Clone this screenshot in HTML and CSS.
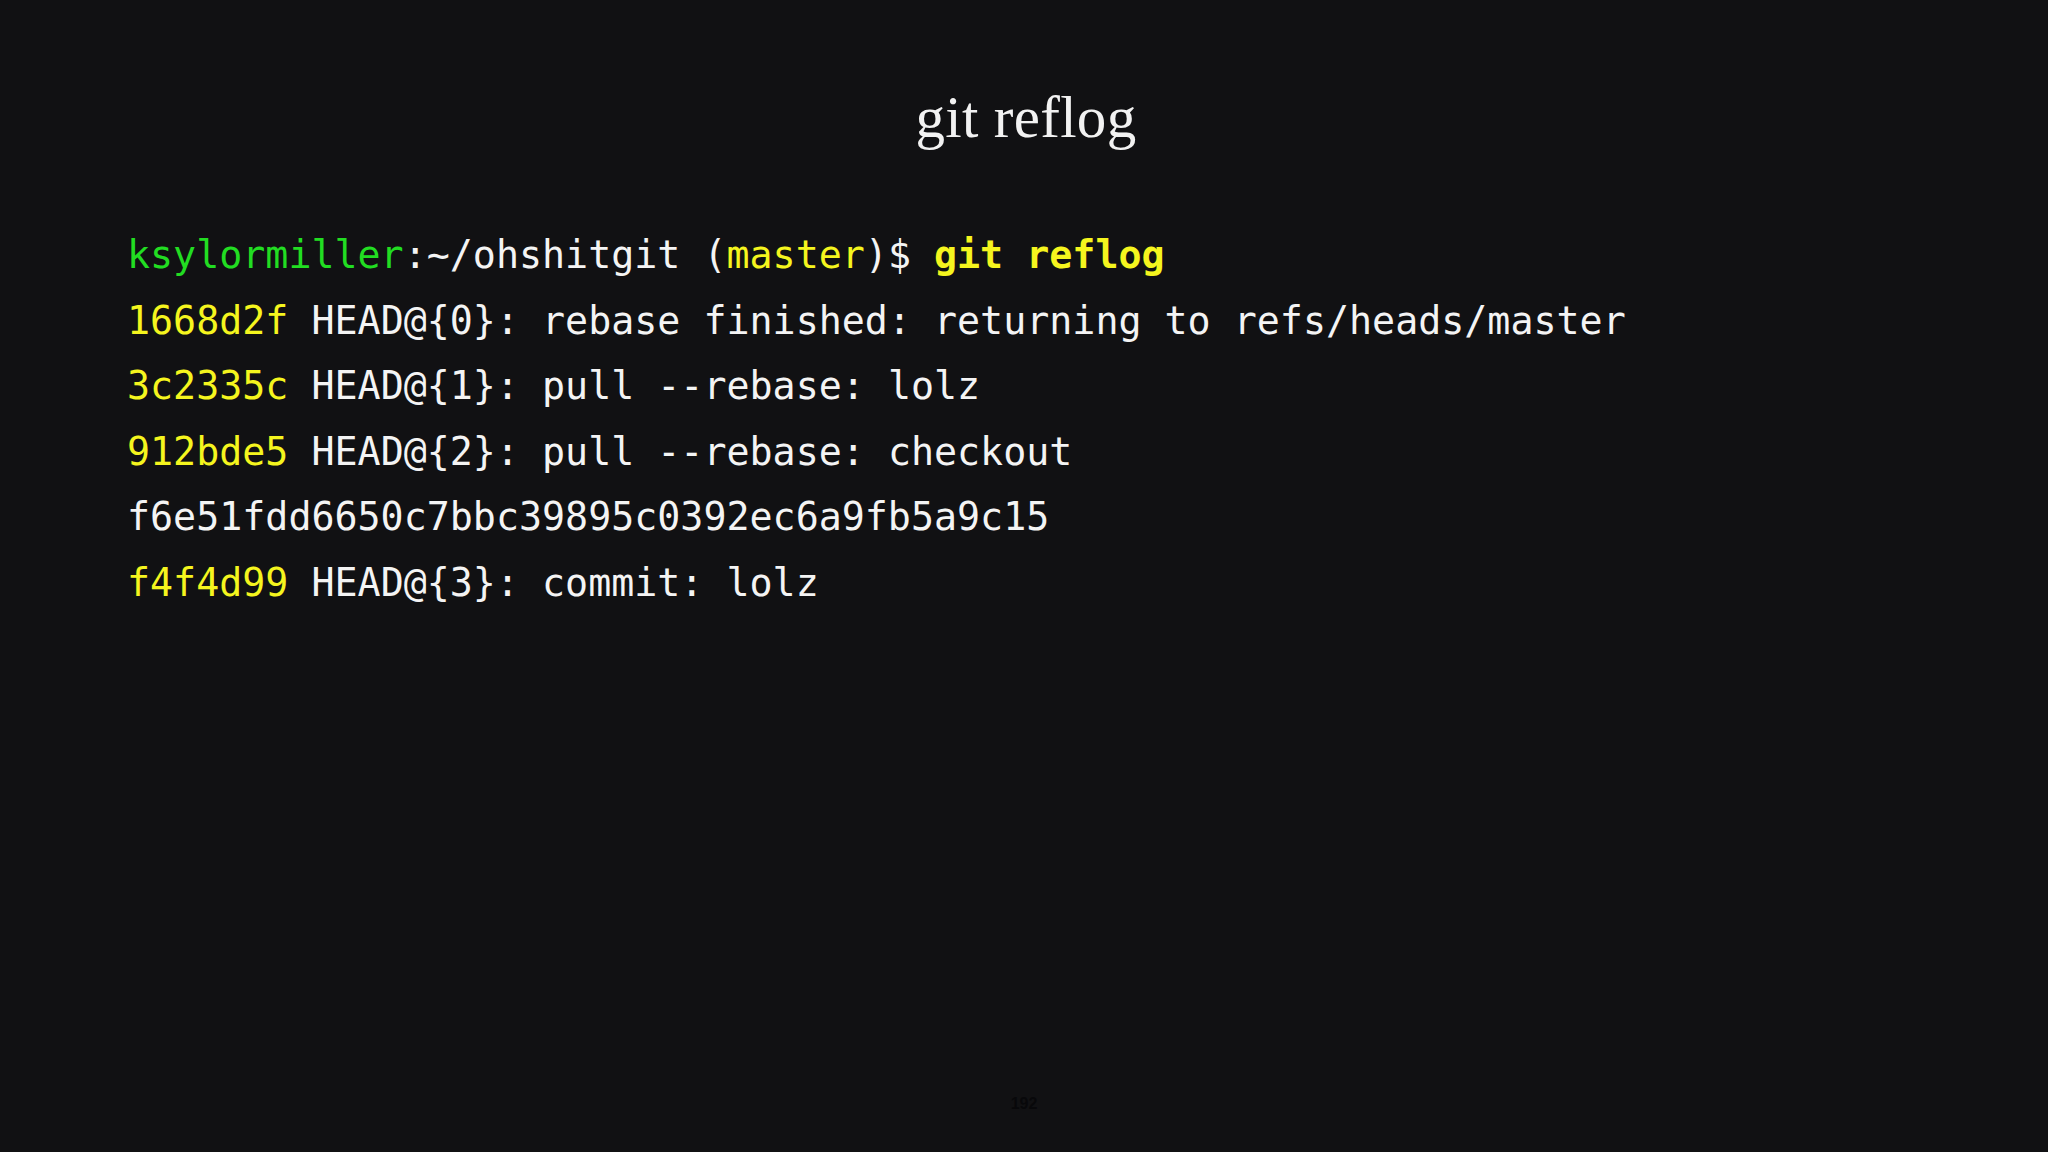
FILE: index.html
```html
<!DOCTYPE html>
<html>
<head>
<meta charset="utf-8">
<link rel="stylesheet" href="styles.css">
</head>
<body>
<div class="slide">
  <h1 class="title">git reflog</h1>
  <div class="term">
    <div class="line"><span class="g">ksylormiller</span>:~/ohshitgit (<span class="y">master</span>)$ <span class="y b">git reflog</span></div>
    <div class="line"><span class="y">1668d2f</span> HEAD@{0}: rebase finished: returning to refs/heads/master</div>
    <div class="line"><span class="y">3c2335c</span> HEAD@{1}: pull --rebase: lolz</div>
    <div class="line"><span class="y">912bde5</span> HEAD@{2}: pull --rebase: checkout</div>
    <div class="line">f6e51fdd6650c7bbc39895c0392ec6a9fb5a9c15</div>
    <div class="line"><span class="y">f4f4d99</span> HEAD@{3}: commit: lolz</div>
  </div>
  <div class="pagenum">192</div>
</div>
</body>
</html>
```

FILE: styles.css
```css
html, body {
  margin: 0;
  padding: 0;
  background: #111113;
}
.slide {
  width: 2048px;
  height: 1152px;
  display: flex;
  flex-direction: column;
  box-sizing: border-box;
  padding-top: 82px;
  padding-bottom: 38px;
}
.title {
  margin: 0;
  font-family: "Liberation Serif", "DejaVu Serif", serif;
  font-weight: normal;
  font-size: 59px;
  line-height: 70px;
  color: #f2f2f2;
  text-align: center;
  letter-spacing: 0.3px;
  padding-left: 4px;
}
.term {
  margin-top: 70px;
  padding-left: 127px;
  font-family: "DejaVu Sans Mono", monospace;
  font-size: 38.3px;
  line-height: 65.5px;
  color: #f4f4f4;
}
.line {
  white-space: pre;
}
.g { color: #22dd22; }
.y { color: #f5f51e; }
.b { font-weight: bold; }
.pagenum {
  margin-top: auto;
  text-align: center;
  font-family: "Liberation Sans", Arial, sans-serif;
  font-weight: bold;
  font-size: 16px;
  line-height: 20px;
  color: #08080a;
}
```
